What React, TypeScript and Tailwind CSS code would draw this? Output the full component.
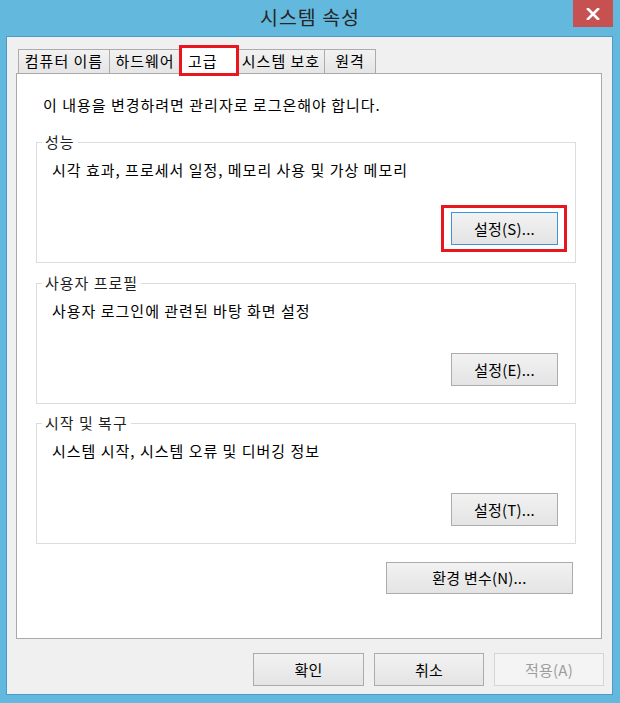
import React from "react";

const FONT = { fontFamily: '"Noto Sans CJK KR", "Noto Sans", sans-serif' };

function Btn({
  children,
  className = "",
  focused = false,
  disabled = false,
}: {
  children: React.ReactNode;
  className?: string;
  focused?: boolean;
  disabled?: boolean;
}) {
  const border = disabled
    ? "border-[#d5d5d5] bg-[#f4f4f4] text-[#9d9d9d]"
    : focused
    ? "border-[#3d95e0] bg-gradient-to-b from-[#f2f2f2] to-[#e4e4e4] text-black"
    : "border-[#acacac] bg-gradient-to-b from-[#f2f2f2] to-[#e4e4e4] text-black";
  return (
    <div
      className={`flex items-center justify-center border text-[15px] leading-[20px] tracking-[0.2px] ${border} ${className}`}
    >
      {children}
    </div>
  );
}

function Group({
  label,
  text,
  button,
  highlight = false,
  className = "",
}: {
  label: string;
  text: string;
  button: string;
  highlight?: boolean;
  className?: string;
}) {
  return (
    <div
      className={`relative ml-[19px] w-[540px] h-[121px] border border-[#dcdcdc] flex flex-col ${className}`}
    >
      <div className="absolute left-[5px] -top-[11px] bg-white px-[3px] text-[15px] leading-[20px] text-[#1e1e1e]">
        {label}
      </div>
      <div className="pl-[15px] pt-[17px] text-[15px] leading-[20px] text-black">{text}</div>
      <div className="mt-auto mb-[17px] mr-[17px] self-end relative">
        <Btn focused={highlight} className="w-[107px] h-[33px]">
          {button}
        </Btn>
        {highlight && (
          <div className="absolute -left-[10px] -right-[9px] -top-[7px] -bottom-[7px] border-[3px] border-[#e8161e]" />
        )}
      </div>
    </div>
  );
}

export default function App() {
  const tabs = [
    { t: "컴퓨터 이름", w: "w-[92px]" },
    { t: "하드웨어", w: "w-[72px]" },
    { t: "고급", w: "w-[58px]", sel: true },
    { t: "시스템 보호", w: "w-[88px]" },
    { t: "원격", w: "w-[52px]" },
  ];
  return (
    <div className="w-[620px] h-[703px] bg-[#63b8de] flex flex-col tracking-[1px]" style={FONT}>
      {/* Title bar */}
      <div className="h-[36px] flex">
        <div className="w-[47px]" />
        <div className="flex-1 flex items-center justify-center text-[19.5px] text-[#262626] pb-[2px]">
          시스템 속성
        </div>
        <div className="w-[40px] h-[27px] mr-[7px] bg-[#c75050] flex items-center justify-center">
          <svg width="14" height="12" viewBox="0 0 14 12">
            <path d="M2 1 L12 11 M12 1 L2 11" stroke="white" strokeWidth="2.6" strokeLinecap="square" />
          </svg>
        </div>
      </div>

      {/* Client area */}
      <div className="ml-[6px] mr-[7px] mb-[8px] flex-1 border border-[#4b9bc6] bg-[#f0f0f0] flex flex-col">
        {/* Tabs */}
        <div className="mt-[11px] ml-[11px] h-[26px] -mb-px flex items-end relative z-10">
          {tabs.map((tab, i) =>
            tab.sel ? (
              <div
                key={i}
                className={`${tab.w} h-[27px] -ml-px relative bg-white border border-b-0 border-[#acacac] flex items-center pl-[7px] text-[15px] text-black`}
              >
                {tab.t}
                <div className="absolute -left-[2px] -right-[2px] -top-[3px] -bottom-[2px] border-[3px] border-[#e8161e]" />
              </div>
            ) : (
              <div
                key={i}
                className={`${tab.w} h-[24px] mb-px ${i > 0 ? "-ml-px" : ""} bg-gradient-to-b from-[#f2f2f2] to-[#e5e5e5] border border-b-0 border-[#acacac] flex items-center justify-center text-[15px] text-black`}
              >
                {tab.t}
              </div>
            )
          )}
        </div>

        {/* Panel */}
        <div className="ml-[9px] w-[586px] h-[566px] bg-white border border-[#a9a9a9] flex flex-col">
          <div className="mt-[21px] pl-[26px] text-[15px] leading-[20px] text-black">
            이 내용을 변경하려면 관리자로 로그온해야 합니다.
          </div>
          <Group
            className="mt-[27px]"
            label="성능"
            text="시각 효과, 프로세서 일정, 메모리 사용 및 가상 메모리"
            button="설정(S)..."
            highlight
          />
          <Group
            className="mt-[20px]"
            label="사용자 프로필"
            text="사용자 로그인에 관련된 바탕 화면 설정"
            button="설정(E)..."
          />
          <Group
            className="mt-[19px]"
            label="시작 및 복구"
            text="시스템 시작, 시스템 오류 및 디버깅 정보"
            button="설정(T)..."
          />
          <Btn className="mt-[18px] ml-[369px] w-[187px] h-[32px]">환경 변수(N)...</Btn>
        </div>

        {/* Bottom buttons */}
        <div className="mt-[14px] mr-[8px] flex justify-end gap-[10px]">
          <Btn className="w-[111px] h-[33px]">확인</Btn>
          <Btn className="w-[110px] h-[33px]">취소</Btn>
          <Btn disabled className="w-[110px] h-[33px]">
            적용(A)
          </Btn>
        </div>
      </div>
    </div>
  );
}
